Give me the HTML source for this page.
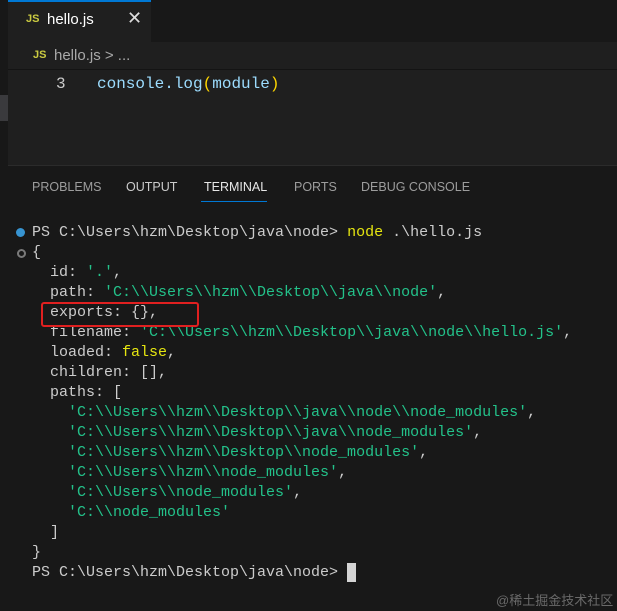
<!DOCTYPE html>
<html><head><style>
body{margin:0;width:617px;height:611px;background:#181818;position:relative;overflow:hidden;font-family:"Liberation Sans",sans-serif}
.a{position:absolute}
.mono{font-family:"Liberation Mono",monospace;font-size:15px;color:#cccccc;white-space:pre}
.g{color:#23c28a}.y{color:#e5e510}
</style></head><body>
<div class="a" style="left:0;top:0;width:8px;height:611px;background:#181818"></div>
<div class="a" style="left:0;top:95px;width:8px;height:26px;background:#3a3a3d"></div>
<div class="a" style="left:8px;top:0;width:143px;height:42px;background:#1f1f1f;border-top:2px solid #0078d4;box-sizing:border-box"></div>
<div class="a" style="left:26px;top:13px;font-size:11px;font-weight:bold;color:#cbcb41">JS</div>
<div class="a" style="left:47px;top:11px;font-size:15px;color:#fff">hello.js</div>
<div class="a" style="left:127px;top:8px;font-size:18px;color:#ddd">✕</div>
<div class="a" style="left:8px;top:42px;width:609px;height:123px;background:#1f1f1f"></div>
<div class="a" style="left:33px;top:49px;font-size:11px;font-weight:bold;color:#cbcb41">JS</div>
<div class="a" style="left:54px;top:47px;font-size:15px;color:#a9a9a9">hello.js &gt; ...</div>
<div class="a" style="left:8px;top:69px;width:609px;height:1px;background:#141414"></div>
<div class="a mono" style="left:56px;top:75px;font-size:16px;color:#ccc">3</div>
<div class="a mono" style="left:97px;top:75px;font-size:16px;color:#9cdcfe">console.log<span style="color:#ffd700">(</span>module<span style="color:#ffd700">)</span></div>
<div class="a" style="left:8px;top:165px;width:609px;height:1px;background:#2b2b2b"></div>
<div class="a" style="top:180px;left:32px;font-size:12.5px;color:#9d9d9d">PROBLEMS</div>
<div class="a" style="top:180px;left:126px;font-size:12.5px;color:#ccc">OUTPUT</div>
<div class="a" style="top:180px;left:204px;font-size:12.5px;color:#e7e7e7">TERMINAL</div>
<div class="a" style="left:201px;top:201px;width:66px;height:1px;background:#0078d4"></div>
<div class="a" style="top:180px;left:294px;font-size:12.5px;color:#9d9d9d">PORTS</div>
<div class="a" style="top:180px;left:361px;font-size:12.5px;color:#9d9d9d">DEBUG CONSOLE</div>
<div class="a" style="left:16px;top:228px;width:9px;height:9px;border-radius:50%;background:#3794d1"></div>
<div class="a" style="left:17px;top:249px;width:5px;height:5px;border-radius:50%;border:2px solid #7a7a7a"></div>
<div class="a mono" style="left:32px;top:223px;line-height:20px">PS C:\Users\hzm\Desktop\java\node&gt; <span class="y">node</span> .\hello.js
{
  id: <span class="g">'.'</span>,
  path: <span class="g">'C:\\Users\\hzm\\Desktop\\java\\node'</span>,
  exports: {},
  filename: <span class="g">'C:\\Users\\hzm\\Desktop\\java\\node\\hello.js'</span>,
  loaded: <span class="y">false</span>,
  children: [],
  paths: [
    <span class="g">'C:\\Users\\hzm\\Desktop\\java\\node\\node_modules'</span>,
    <span class="g">'C:\\Users\\hzm\\Desktop\\java\\node_modules'</span>,
    <span class="g">'C:\\Users\\hzm\\Desktop\\node_modules'</span>,
    <span class="g">'C:\\Users\\hzm\\node_modules'</span>,
    <span class="g">'C:\\Users\\node_modules'</span>,
    <span class="g">'C:\\node_modules'</span>
  ]
}
PS C:\Users\hzm\Desktop\java\node&gt; </div>
<div class="a" style="left:347px;top:563px;width:9px;height:19px;background:#d4d4d4"></div>
<div class="a" style="left:41px;top:302px;width:154px;height:21px;border:2px solid #e02020;border-radius:3px"></div>
<div class="a" style="left:496px;top:590px;font-size:13px;color:#6a6a6a;font-family:'Liberation Sans','Noto Sans CJK SC',sans-serif">@稀土掘金技术社区</div>
</body></html>
